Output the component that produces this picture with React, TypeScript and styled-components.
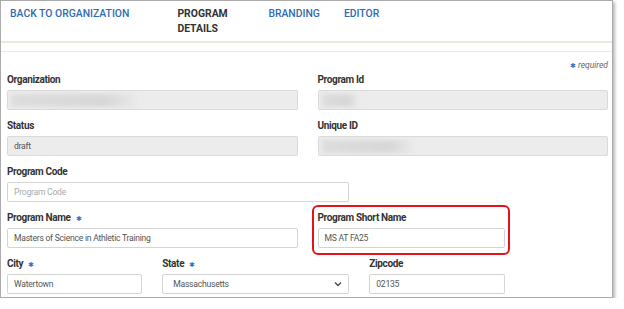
import React from 'react';
import styled, { createGlobalStyle } from 'styled-components';

const GlobalStyle = createGlobalStyle`
  body {
    margin: 0;
    background: #fff;
    font-family: Roboto, 'Liberation Sans', sans-serif;
  }
`;

const Panel = styled.div`
  width: 611px;
  height: 296px;
  border: 1px solid #ababab;
  box-shadow: 2px 2px 3px rgba(0, 0, 0, 0.28);
  background: #fff;
  overflow: hidden;
`;

const Nav = styled.div`
  display: flex;
  align-items: flex-start;
  height: 42px;
  padding-top: 5px;
  box-sizing: border-box;
  border-bottom: 2px solid #ebe8dc;
`;

const NavItem = styled.div<{ $offset: number; $active?: boolean }>`
  margin-left: ${(p) => p.$offset}px;
  font-size: 10.4px;
  line-height: 15px;
  text-transform: uppercase;
  color: ${(p) => (p.$active ? '#333' : '#2f6bb3')};
  font-weight: ${(p) => (p.$active ? 700 : 500)};
  width: ${(p) => (p.$active ? '58px' : 'auto')};
`;

const Form = styled.div`
  margin-top: 8px;
  border-top: 1px solid #e8e8e8;
  padding: 9px 4px 0 6px;
`;

const Required = styled.div`
  text-align: right;
  font-size: 8.5px;
  line-height: 12px;
  font-style: italic;
  color: #666;
  margin-top: -2px;
`;

const Star = styled.span`
  color: #2f74c9;
  font-style: normal;
  font-weight: 400;
  font-size: 7px;
  line-height: 0;
  margin: 0 2px 0 3px;
`;

const Grid = styled.div`
  display: grid;
  grid-template-columns: repeat(12, 1fr);
  column-gap: 20px;
  margin-top: 2px;
`;

const Field = styled.div<{ $span: number; $marked?: boolean }>`
  grid-column: span ${(p) => p.$span};
  margin-bottom: 9px;
  position: relative;
  ${(p) =>
    p.$marked &&
    `
    &::after {
      content: '';
      position: absolute;
      top: -6px;
      left: -6px;
      right: -5px;
      bottom: -7px;
      border: 2px solid #e3121c;
      border-radius: 6px;
      pointer-events: none;
    }
  `}
`;

const Label = styled.div`
  font-size: 10px;
  line-height: 13px;
  font-weight: 700;
  letter-spacing: -0.35px;
  color: #333;
  margin-bottom: 4px;
  white-space: nowrap;
`;

const Box = styled.div<{ $disabled?: boolean }>`
  height: 20px;
  box-sizing: border-box;
  border: 1px solid ${(p) => (p.$disabled ? '#dadada' : '#d4d4d4')};
  border-radius: 2px;
  background: ${(p) => (p.$disabled ? '#ececec' : '#fff')};
  display: flex;
  align-items: center;
  padding: 0 6px;
  font-size: 8.6px;
  letter-spacing: -0.25px;
  color: #555;
  overflow: hidden;
`;

const Placeholder = styled.span`
  color: #aaa;
`;

const Blur = styled.div<{ $w: number }>`
  width: ${(p) => p.$w}px;
  height: 13px;
  margin-left: -3px;
  background: linear-gradient(to right, #dddddd, #d7d7d7 75%, #e8e8e8);
  filter: blur(2px);
`;

const SelectText = styled.span`
  flex: 1;
  padding-left: 4px;
`;

const Chevron = () => (
  <svg width="8" height="6" viewBox="0 0 8 6">
    <path d="M1 1.5 L4 4.5 L7 1.5" fill="none" stroke="#444" strokeWidth="1.3" />
  </svg>
);

const Req = () => <Star>✱</Star>;

export default function App() {
  return (
    <>
      <GlobalStyle />
      <Panel>
        <Nav>
          <NavItem $offset={9}>Back to Organization</NavItem>
          <NavItem $offset={48} $active>
            Program Details
          </NavItem>
          <NavItem $offset={33}>Branding</NavItem>
          <NavItem $offset={24}>Editor</NavItem>
        </Nav>
        <Form>
          <Required>
            <Star>✱</Star>required
          </Required>
          <Grid>
            <Field $span={6}>
              <Label>Organization</Label>
              <Box $disabled>
                <Blur $w={125} />
              </Box>
            </Field>
            <Field $span={6}>
              <Label>Program Id</Label>
              <Box $disabled>
                <Blur $w={35} />
              </Box>
            </Field>
            <Field $span={6}>
              <Label>Status</Label>
              <Box $disabled>draft</Box>
            </Field>
            <Field $span={6}>
              <Label>Unique ID</Label>
              <Box $disabled>
                <Blur $w={90} />
              </Box>
            </Field>
            <Field $span={7}>
              <Label>Program Code</Label>
              <Box>
                <Placeholder>Program Code</Placeholder>
              </Box>
            </Field>
            <Field $span={6}>
              <Label>
                Program Name <Req />
              </Label>
              <Box>Masters of Science in Athletic Training</Box>
            </Field>
            <Field $span={4} $marked>
              <Label>Program Short Name</Label>
              <Box>MS AT FA25</Box>
            </Field>
            <Field $span={3}>
              <Label>
                City <Req />
              </Label>
              <Box>Watertown</Box>
            </Field>
            <Field $span={4}>
              <Label>
                State <Req />
              </Label>
              <Box>
                <SelectText>Massachusetts</SelectText>
                <Chevron />
              </Box>
            </Field>
            <Field $span={3}>
              <Label>Zipcode</Label>
              <Box>02135</Box>
            </Field>
          </Grid>
        </Form>
      </Panel>
    </>
  );
}
